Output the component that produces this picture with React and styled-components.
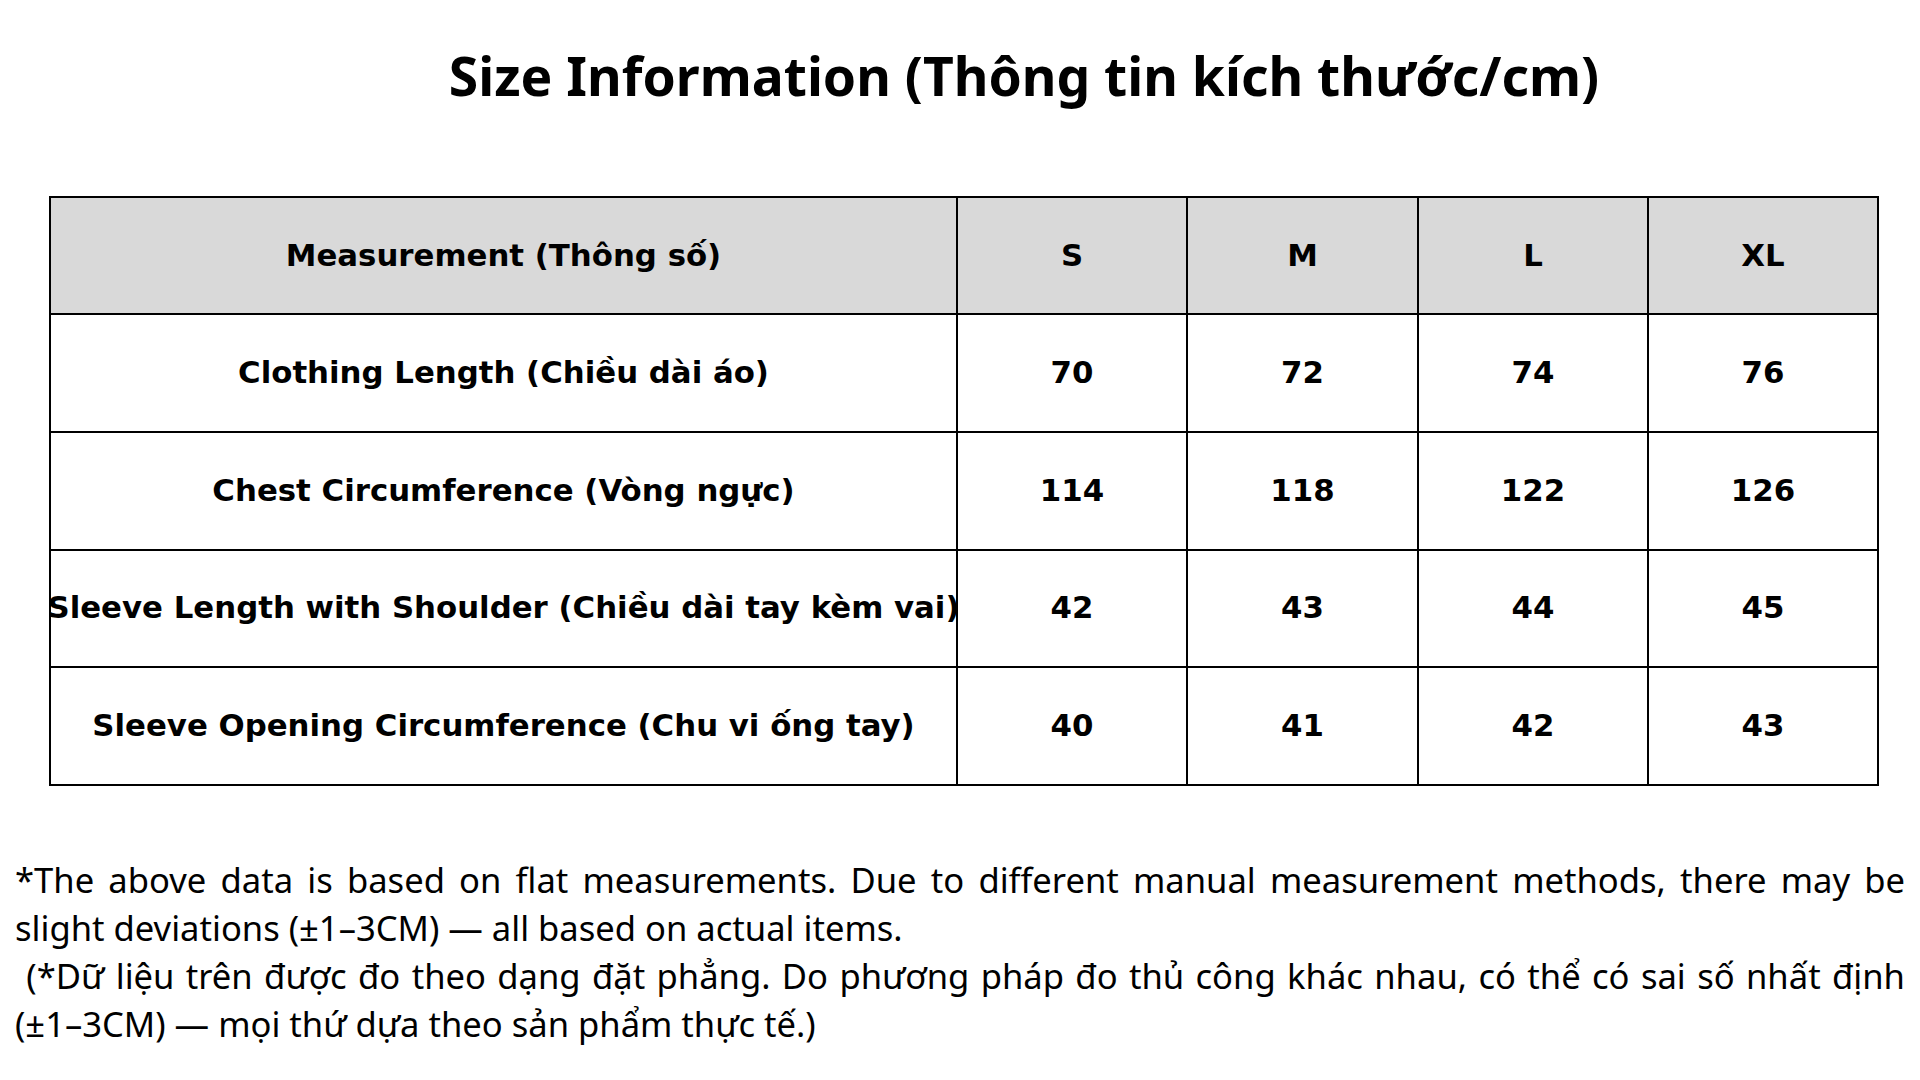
import React from "react";
import styled, { createGlobalStyle } from "styled-components";

const GlobalStyle = createGlobalStyle`
  html, body { margin: 0; padding: 0; background: #ffffff; }
  * { box-sizing: border-box; }
`;

const Page = styled.div`
  width: 1920px;
  height: 1080px;
  overflow: hidden;
  background: #ffffff;
  color: #000000;
  display: flex;
  flex-direction: column;
`;

const Title = styled.h1`
  margin: 44px 0 0 0;
  padding-left: 128px;
  height: 64px;
  line-height: 64px;
  text-align: center;
  font-family: "Noto Sans", "Open Sans", sans-serif;
  font-weight: 700;
  font-size: 53.4px;
  white-space: nowrap;
`;

const Table = styled.table`
  margin: 88px 43px 0 49px;
  width: 1828px;
  border-collapse: collapse;
  table-layout: fixed;
  border: 2px solid #000;
`;

const Row = styled.tr`
  height: ${(p) => (p.$head ? "117px" : "117.75px")};
  background: ${(p) => (p.$head ? "#d9d9d9" : "#ffffff")};
`;

const Cell = styled.td`
  border: 2px solid #000;
  padding: 0 0 2px 0;
  text-align: center;
  vertical-align: middle;
  font-family: "DejaVu Sans", sans-serif;
  font-weight: 700;
  font-size: 30.8px;
  white-space: nowrap;
  overflow: visible;
`;

const CellText = styled.div`
  display: flex;
  justify-content: center;
  width: 100%;
`;

const Notes = styled.div`
  margin-top: 70px;
  padding: 0 15px;
  font-family: "Noto Sans", "Open Sans", sans-serif;
  font-size: 34.6px;
  line-height: 48px;
  font-weight: 400;
`;

const NoteLine = styled.div`
  text-align: ${(p) => (p.$justify ? "justify" : "left")};
  text-align-last: ${(p) => (p.$justify ? "justify" : "left")};
  height: 48px;
`;

const sizes = ["S", "M", "L", "XL"];
const rows = [
  ["Clothing Length (Chiều dài áo)", 70, 72, 74, 76],
  ["Chest Circumference (Vòng ngực)", 114, 118, 122, 126],
  ["Sleeve Length with Shoulder (Chiều dài tay kèm vai)", 42, 43, 44, 45],
  ["Sleeve Opening Circumference (Chu vi ống tay)", 40, 41, 42, 43],
];

export default function App() {
  return (
    <>
      <GlobalStyle />
      <Page>
        <Title>Size Information (Thông tin kích thước/cm)</Title>
        <Table>
          <colgroup>
            <col style={{ width: "907px" }} />
            <col style={{ width: "230px" }} />
            <col style={{ width: "231px" }} />
            <col style={{ width: "230px" }} />
            <col style={{ width: "230px" }} />
          </colgroup>
          <tbody>
            <Row $head>
              <Cell>
                <CellText>Measurement (Thông số)</CellText>
              </Cell>
              {sizes.map((s) => (
                <Cell key={s}>
                  <CellText>{s}</CellText>
                </Cell>
              ))}
            </Row>
            {rows.map((r) => (
              <Row key={r[0]}>
                {r.map((v, i) => (
                  <Cell key={i}>
                    <CellText>{v}</CellText>
                  </Cell>
                ))}
              </Row>
            ))}
          </tbody>
        </Table>
        <Notes>
          <NoteLine $justify>
            *The above data is based on flat measurements. Due to different manual measurement methods, there may be
          </NoteLine>
          <NoteLine>slight deviations (±1–3CM) — all based on actual items.</NoteLine>
          <NoteLine $justify>
            {"\u00a0(*Dữ liệu trên được đo theo dạng đặt phẳng. Do phương pháp đo thủ công khác nhau, có thể có sai số nhất định"}
          </NoteLine>
          <NoteLine>(±1–3CM) — mọi thứ dựa theo sản phẩm thực tế.)</NoteLine>
        </Notes>
      </Page>
    </>
  );
}
